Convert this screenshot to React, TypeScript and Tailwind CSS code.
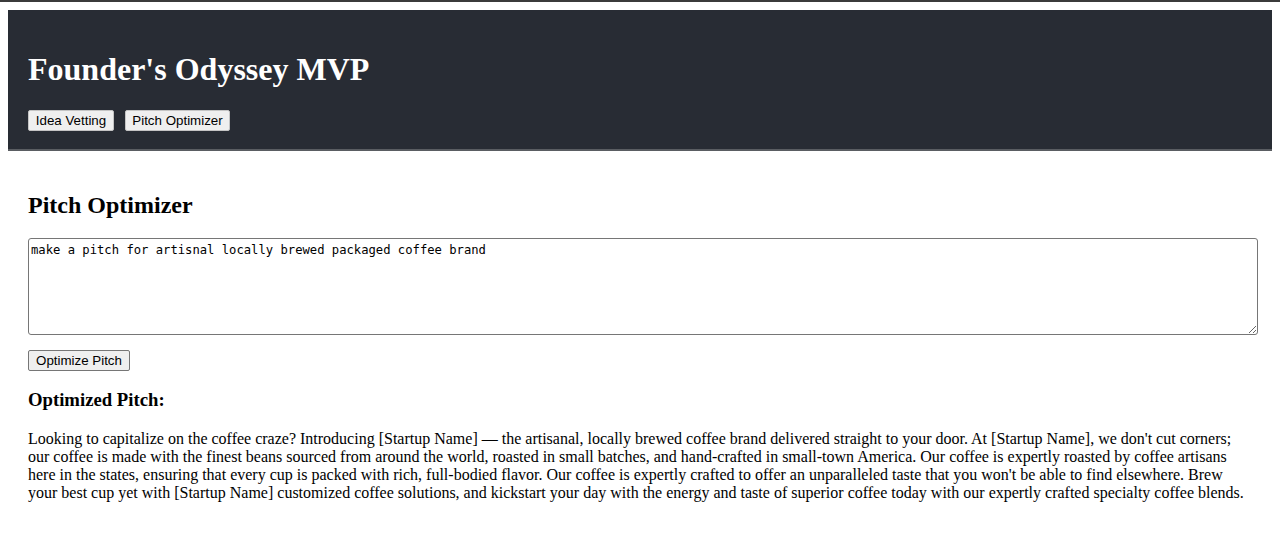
import React, { useState } from 'react';

const pitch =
  "Looking to capitalize on the coffee craze? Introducing [Startup Name] \u2014 the artisanal, locally brewed coffee brand delivered straight to your door. At [Startup Name], we don't cut corners; our coffee is made with the finest beans sourced from around the world, roasted in small batches, and hand-crafted in small-town America. Our coffee is expertly roasted by coffee artisans here in the states, ensuring that every cup is packed with rich, full-bodied flavor. Our coffee is expertly crafted to offer an unparalleled taste that you won't be able to find elsewhere. Brew your best cup yet with [Startup Name] customized coffee solutions, and kickstart your day with the energy and taste of superior coffee today with our expertly crafted specialty coffee blends.";

const btn =
  "bg-[#efefef] border border-[#767676] rounded-[2px] px-[6px] h-[21px] whitespace-nowrap text-[13.33px] leading-none text-black font-['Liberation_Sans',Arial,sans-serif]";

export default function App() {
  const [prompt, setPrompt] = useState('make a pitch for artisnal locally brewed packaged coffee brand');

  return (
    <div className="min-h-[560px] bg-white font-['Liberation_Serif','Times_New_Roman',serif] text-black">
      <div className="h-[2px] bg-[#3b3b3b]" />
      <div className="px-2 pt-2">
        {/* Header */}
        <header className="bg-[#282c34] border-b-2 border-[#5a5d62] px-5 pt-[41px] pb-[18px]">
          <h1 className="text-white text-[32px] font-bold leading-[37px] mb-[22px]">Founder's Odyssey MVP</h1>
          <div className="flex gap-[11px]">
            <button className={`${btn} w-[86px] border-[#c4c4c4]`}>Idea Vetting</button>
            <button className={`${btn} w-[105px] border-[#c4c4c4]`}>Pitch Optimizer</button>
          </div>
        </header>

        {/* Pitch optimizer */}
        <main className="px-5 pt-[40px]">
          <h2 className="text-[24px] font-bold leading-[28px] mb-[19px]">Pitch Optimizer</h2>
          <textarea
            value={prompt}
            onChange={(e) => setPrompt(e.target.value)}
            spellCheck={false}
            className="block w-[1230px] h-[97px] border border-[#767676] rounded-[3px] px-[2px] pt-[3px] pb-[1px] text-[12.2px] leading-[16px] font-['DejaVu_Sans_Mono','Liberation_Mono',monospace] outline-none resize-y"
          />
          <button className={`${btn} w-[102px] mt-[15px] block`}>Optimize Pitch</button>
          <h3 className="text-[18.72px] font-bold leading-[22px] mt-[18px] mb-[19px]">Optimized Pitch:</h3>
          <p className="text-[16px] leading-[18px] pr-[8px]">{pitch}</p>
        </main>
      </div>
    </div>
  );
}
